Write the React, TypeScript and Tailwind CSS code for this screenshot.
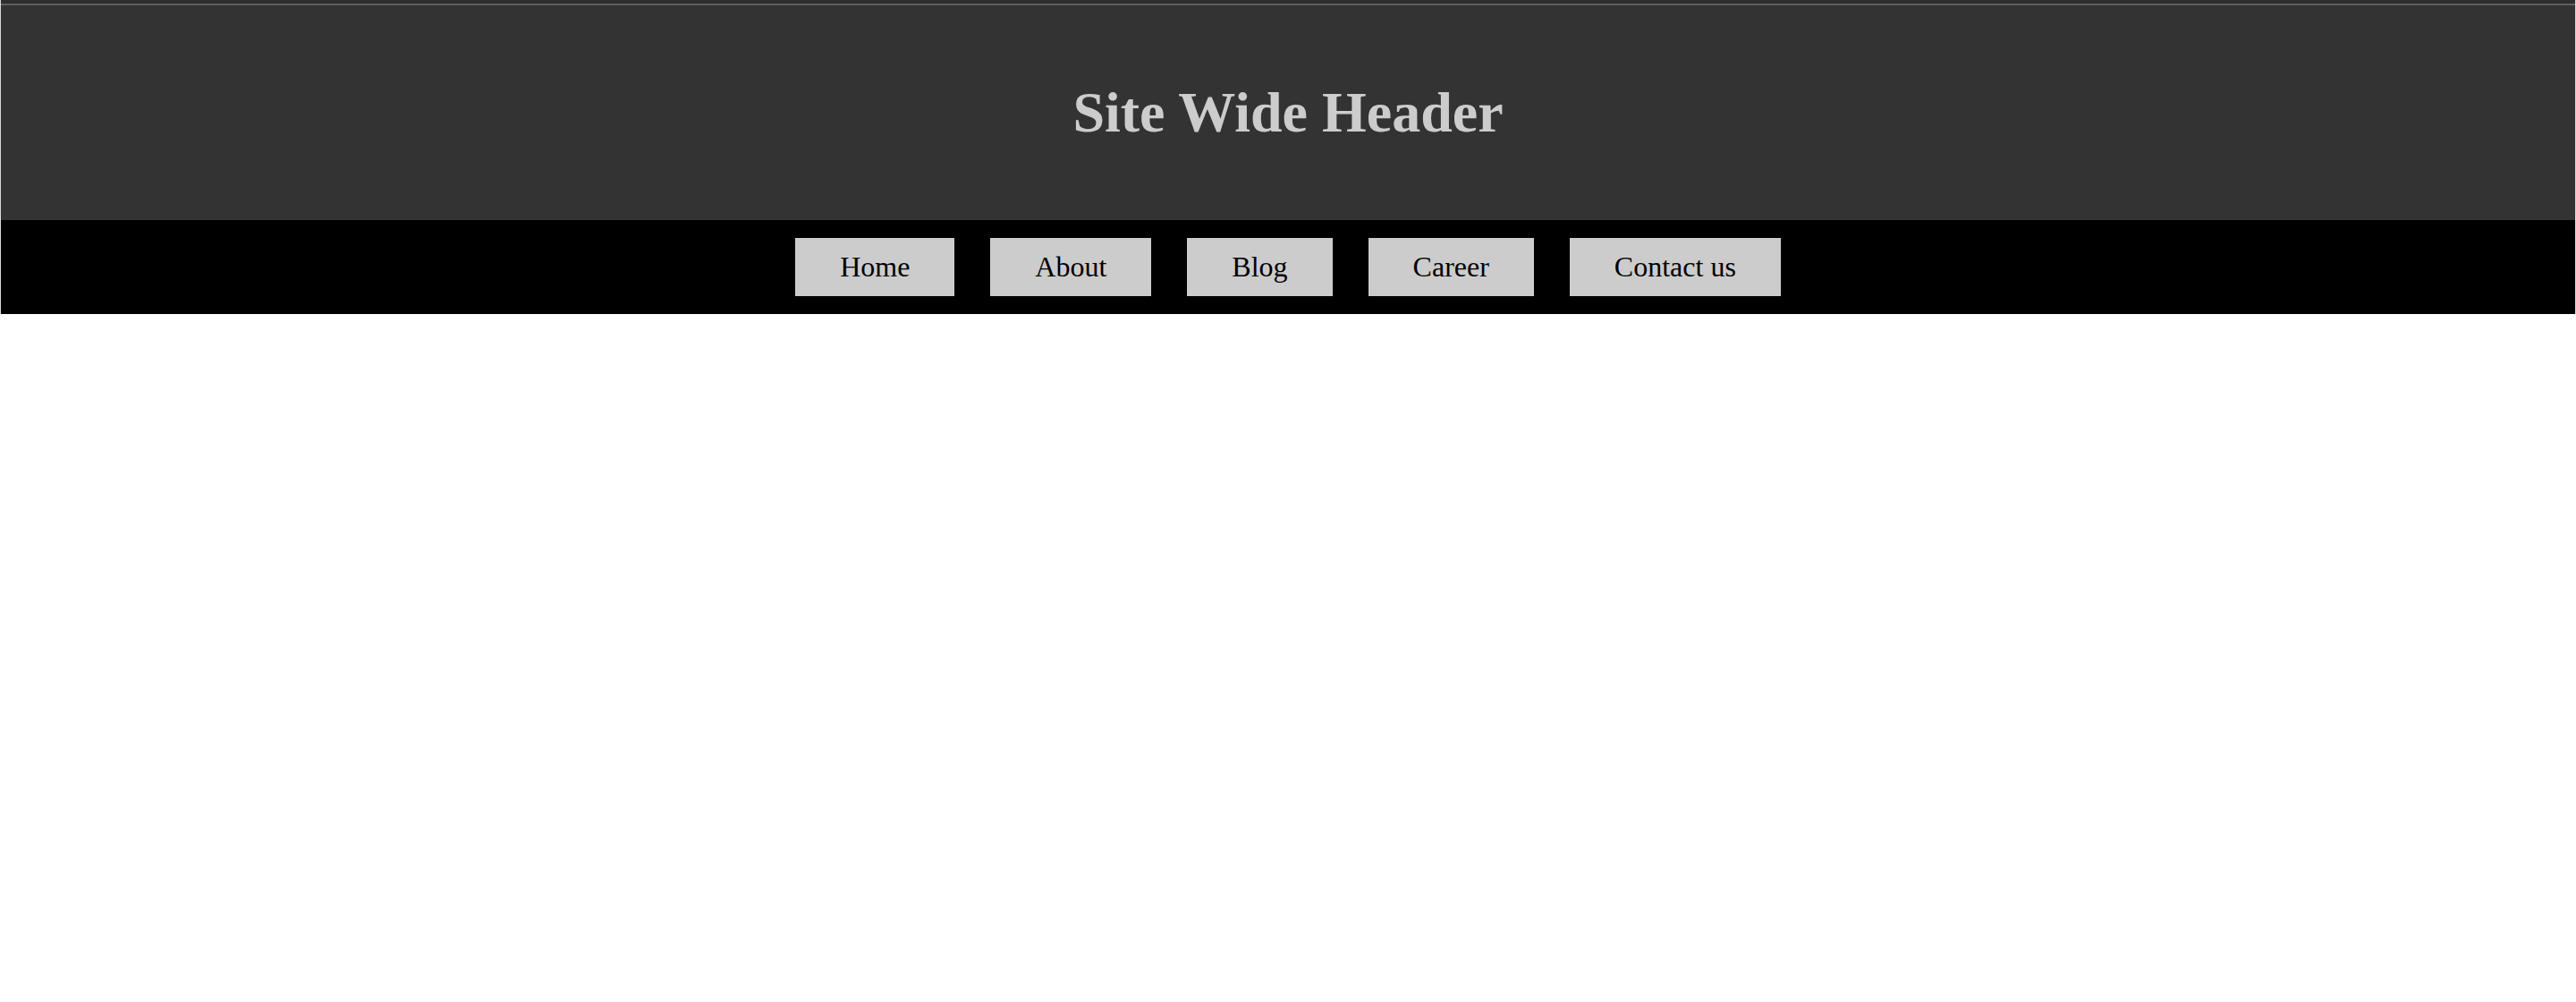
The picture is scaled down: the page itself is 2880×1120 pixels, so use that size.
export default function App() {
  const items = ["Home", "About", "Blog", "Career", "Contact us"];
  return (
    <div className="w-full min-h-[1120px] bg-white" style={{ fontFamily: '"Liberation Serif", "Times New Roman", serif' }}>
      <div className="border-x border-[#808080]/30">
        <div className="h-[4px] bg-[#2e2e2e]" />
        <div className="h-[2px] bg-[#5f5f5f]" />
        <header className="h-[240px] bg-[#333333] flex items-center justify-center">
          <h1 className="text-[64px] font-bold text-[#cccccc] leading-normal">Site Wide Header</h1>
        </header>
        <nav className="h-[105px] bg-black flex items-center justify-center gap-[40px]">
          {items.map((it) => (
            <a key={it} href="#" className="block bg-[#cccccc] text-black text-[32px] leading-[37px] px-[50px] py-[14px]">
              {it}
            </a>
          ))}
        </nav>
      </div>
    </div>
  );
}
